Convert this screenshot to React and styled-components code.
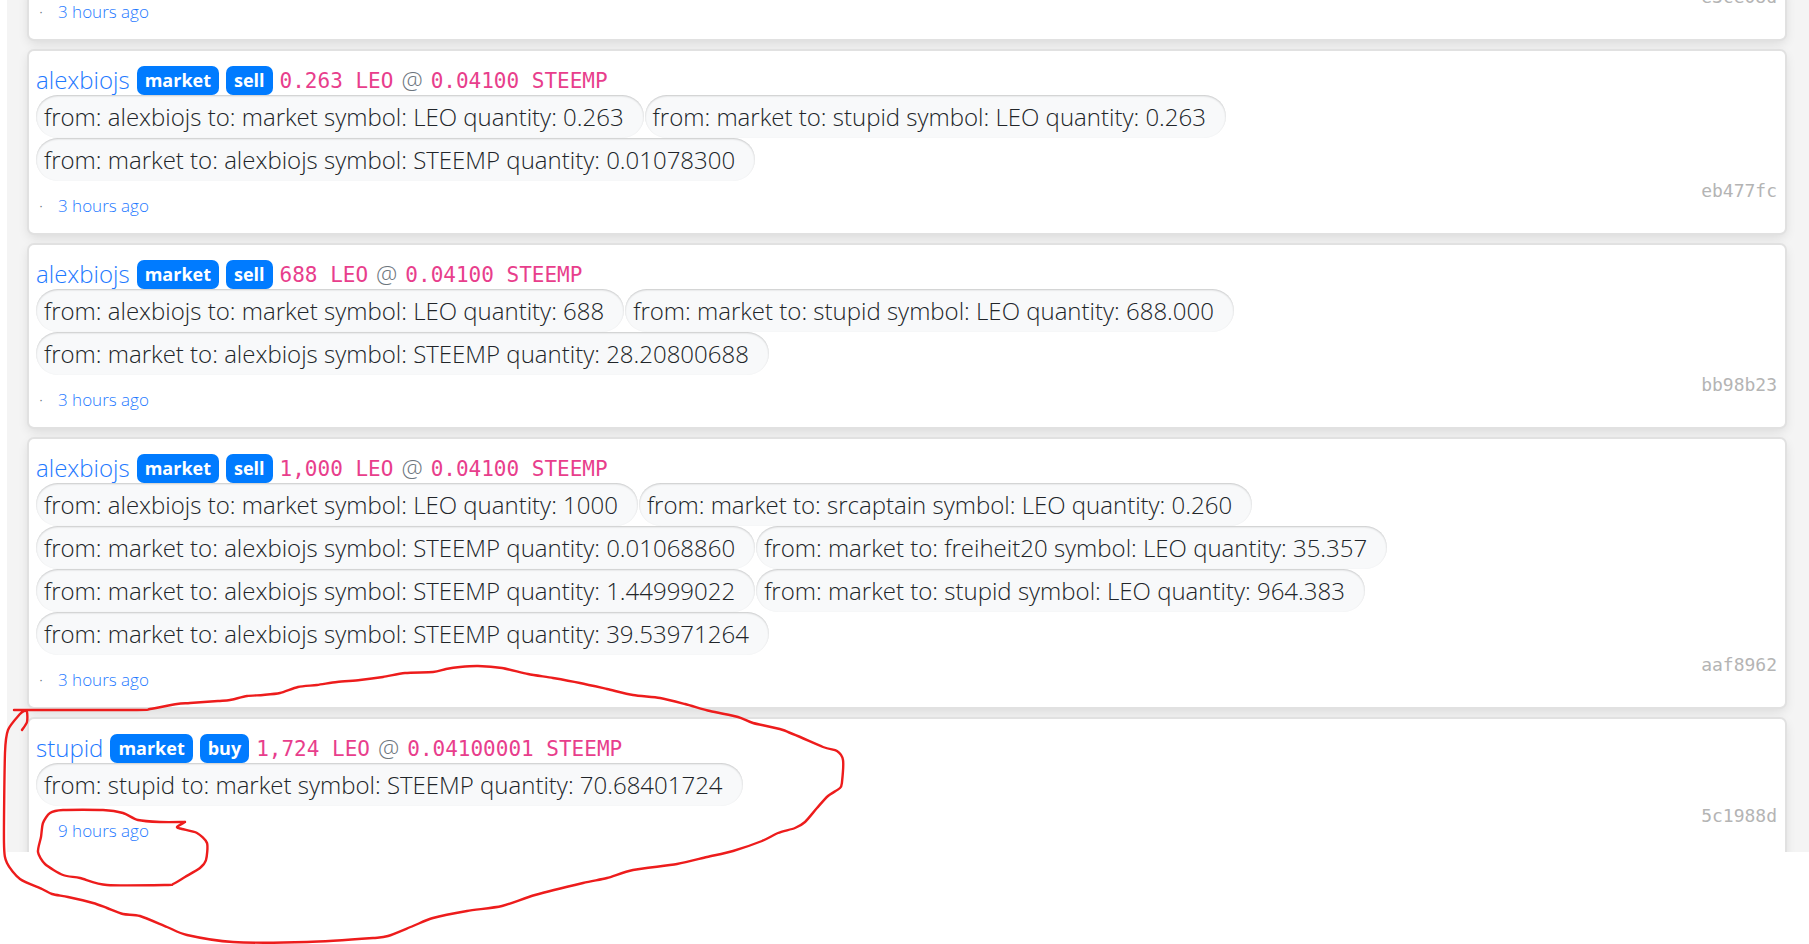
import React from "react";
import styled, { createGlobalStyle } from "styled-components";

const transactions = [
  {
    id: "eb477fc",
    account: "alexbiojs",
    action: "sell",
    amount: "0.263 LEO",
    price: "0.04100 STEEMP",
    age: "3 hours ago",
    events: [
      "from: alexbiojs to: market symbol: LEO quantity: 0.263",
      "from: market to: stupid symbol: LEO quantity: 0.263",
      "from: market to: alexbiojs symbol: STEEMP quantity: 0.01078300",
    ],
  },
  {
    id: "bb98b23",
    account: "alexbiojs",
    action: "sell",
    amount: "688 LEO",
    price: "0.04100 STEEMP",
    age: "3 hours ago",
    events: [
      "from: alexbiojs to: market symbol: LEO quantity: 688",
      "from: market to: stupid symbol: LEO quantity: 688.000",
      "from: market to: alexbiojs symbol: STEEMP quantity: 28.20800688",
    ],
  },
  {
    id: "aaf8962",
    account: "alexbiojs",
    action: "sell",
    amount: "1,000 LEO",
    price: "0.04100 STEEMP",
    age: "3 hours ago",
    events: [
      "from: alexbiojs to: market symbol: LEO quantity: 1000",
      "from: market to: srcaptain symbol: LEO quantity: 0.260",
      "from: market to: alexbiojs symbol: STEEMP quantity: 0.01068860",
      "from: market to: freiheit20 symbol: LEO quantity: 35.357",
      "from: market to: alexbiojs symbol: STEEMP quantity: 1.44999022",
      "from: market to: stupid symbol: LEO quantity: 964.383",
      "from: market to: alexbiojs symbol: STEEMP quantity: 39.53971264",
    ],
  },
  {
    id: "5c1988d",
    account: "stupid",
    action: "buy",
    amount: "1,724 LEO",
    price: "0.04100001 STEEMP",
    age: "9 hours ago",
    noDot: true,
    events: ["from: stupid to: market symbol: STEEMP quantity: 70.68401724"],
  },
];

// pen strokes drawn over the last order
const outerStroke = [
  [14, 710], [137, 710], [150, 709], [177, 704], [190, 703], [218, 701],
  [230, 700], [247, 696], [263, 695], [280, 693], [298, 687], [317, 685],
  [337, 682], [360, 680], [383, 677], [405, 673], [433, 672], [446, 669],
  [460, 667], [478, 666], [502, 668], [528, 674], [553, 678], [580, 683],
  [607, 689], [633, 695], [660, 698], [685, 704], [710, 711], [738, 717],
  [753, 723], [783, 730], [823, 747], [837, 751], [843, 760], [842, 782],
  [840, 788], [828, 796], [817, 808], [805, 822], [795, 828], [778, 833],
  [762, 841], [733, 851], [707, 857], [677, 864], [633, 870], [607, 878],
  [583, 883], [535, 895], [502, 906], [467, 911], [433, 918], [413, 926],
  [388, 936], [373, 938], [307, 942], [233, 942], [187, 935], [167, 927],
  [140, 916], [123, 914], [107, 908], [93, 903], [68, 897], [52, 894],
  [42, 889], [20, 879], [7, 863], [4, 843], [5, 753], [8, 730],
  [20, 714], [24, 711], [27, 712], [27, 722], [22, 730],
];

const innerStroke = [
  [185, 822], [177, 827], [182, 829], [197, 833], [207, 843], [206, 860],
  [200, 868], [185, 877], [173, 884], [167, 885], [107, 885], [80, 878],
  [63, 875], [45, 864], [38, 852], [41, 837], [43, 823], [50, 813],
  [63, 810], [103, 810], [123, 813], [138, 820], [160, 822], [185, 822],
];

// smooth curve through every point
const toPath = (points) =>
  points.slice(1).reduce((path, p, i) => {
    const before = points[i - 1] || points[i];
    const from = points[i];
    const after = points[i + 2] || p;
    const c1 = [from[0] + (p[0] - before[0]) / 8, from[1] + (p[1] - before[1]) / 8];
    const c2 = [p[0] - (after[0] - from[0]) / 8, p[1] - (after[1] - from[1]) / 8];
    return `${path} C${c1} ${c2} ${p}`;
  }, `M${points[0]}`);

const CardFooter = ({ id, age, noDot }) => (
  <Footer>
    <Dot>{noDot ? "" : "·"}</Dot>
    <Age href="#">{age}</Age>
    <Hash href="#">{id}</Hash>
  </Footer>
);

const Transaction = ({ tx }) => (
  <Card>
    <Heading>
      <Account href="#">{tx.account}</Account>
      <Badge>market</Badge>
      <Badge>{tx.action}</Badge>
      <Order>
        <Code>{tx.amount}</Code>
        <At>@</At>
        <Code>{tx.price}</Code>
      </Order>
    </Heading>
    <Events>
      {tx.events.map((event) => (
        <Event key={event}>{event}</Event>
      ))}
    </Events>
    <CardFooter id={tx.id} age={tx.age} noDot={tx.noDot} />
  </Card>
);

const App = () => {
  return (
    <Page>
      <GlobalStyle />
      <Feed>
        <Card $scrolled>
          <CardFooter id="e3ce08d" age="3 hours ago" />
        </Card>
        {transactions.map((tx) => (
          <Transaction key={tx.id} tx={tx} />
        ))}
      </Feed>
      <Marker aria-hidden="true">
        <path d={toPath(outerStroke)} />
        <path d={toPath(innerStroke)} />
      </Marker>
    </Page>
  );
};

export default App;

const GlobalStyle = createGlobalStyle`
  * {
    box-sizing: border-box;
  }

  body {
    margin: 0;
    background-color: #fff;
    font-family: "Open Sans", "Noto Sans", sans-serif;
    font-weight: 300;
  }

  a {
    color: #1f7aff;
    text-decoration: none;
  }
`;

const Page = styled.main`
  position: relative;
  min-height: 100vh;
  padding-left: 7px;
  overflow: hidden;
`;

const Feed = styled.div`
  display: flex;
  flex-direction: column;
  gap: 12px;
  height: 852px;
  overflow: hidden;
  padding: 0 24px 0 22px;
  background-color: #f4f4f4;
`;

const Card = styled.article`
  flex-shrink: 0;
  margin-top: ${({ $scrolled }) => ($scrolled ? "-13px" : "0")};
  padding: ${({ $scrolled }) => ($scrolled ? "0" : "15px")} 8px 0 7px;
  border-radius: 5px;
  background-color: #fff;
  box-shadow: 0 0 0 2px #e1e1e1, 0 4px 12px rgba(0, 0, 0, 0.12);
`;

const Heading = styled.header`
  display: flex;
  align-items: center;
  height: 29px;
  gap: 7px;
  white-space: nowrap;
`;

const Account = styled.a`
  padding-bottom: 3px;
  font-size: 24px;
`;

const Badge = styled.span`
  padding: 0 8px;
  border-radius: 7px;
  background-color: #007bff;
  color: #fff;
  font-size: 18px;
  font-weight: 700;
  line-height: 29px;
`;

const Order = styled.span`
  display: flex;
  align-items: center;
  gap: 8px;
`;

const Code = styled.code`
  color: #e83e8c;
  font-family: "DejaVu Sans Mono", monospace;
  font-size: 21px;
  font-weight: 400;
`;

const At = styled.span`
  padding-bottom: 3px;
  color: #6c757d;
  font-size: 24px;
`;

const Events = styled.div`
  display: flex;
  flex-wrap: wrap;
  column-gap: 1px;
`;

const Event = styled.span`
  padding: 1px 20px 0 8px;
  border-radius: 22px;
  background-color: #f8f9fa;
  box-shadow: inset 0 1px 2px rgba(0, 0, 0, 0.2);
  color: #212529;
  font-size: 24px;
  line-height: 42px;
  white-space: nowrap;
`;

const Footer = styled.footer`
  display: flex;
  align-items: flex-start;
  height: 52px;
  font-size: 17px;
`;

const Dot = styled.span`
  width: 22px;
  padding: 13px 0 0 3px;
  color: #6c757d;
  line-height: 24px;
`;

const Age = styled.a`
  padding-top: 13px;
  line-height: 24px;
`;

const Hash = styled.a`
  margin-left: auto;
  color: #b4b4b4;
  font-family: "DejaVu Sans Mono", monospace;
  font-size: 18px;
  font-weight: 400;
  line-height: 20px;
`;

const Marker = styled.svg`
  position: absolute;
  top: 0;
  left: 0;
  width: 100%;
  height: 100%;
  pointer-events: none;

  path {
    fill: none;
    stroke: #ed1c1c;
    stroke-width: 2.4;
    stroke-linecap: round;
    stroke-linejoin: round;
  }
`;
